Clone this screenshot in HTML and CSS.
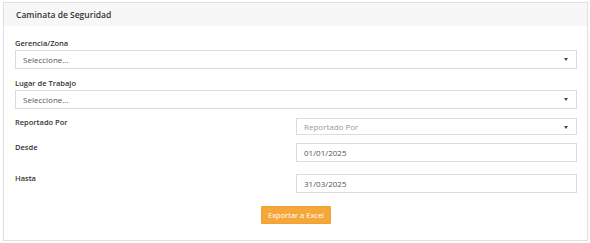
FILE: index.html
```html
<!DOCTYPE html>
<html lang="es">
<head>
  <meta charset="UTF-8" />
  <title>Caminata de Seguridad</title>
  <link rel="stylesheet" href="styles.css">
</head>
<body>
  <div class="panel">
    <div class="panel-heading">Caminata de Seguridad</div>
    <div class="panel-body">
      <label class="field-label">Gerencia/Zona</label>
      <div class="select">Seleccione...</div>

      <label class="field-label lugar">Lugar de Trabajo</label>
      <div class="select">Seleccione...</div>

      <div class="row row-reportado">
        <label class="field-label">Reportado Por</label>
        <div class="select placeholder">Reportado Por</div>
      </div>

      <div class="row row-desde">
        <label class="field-label">Desde</label>
        <div class="input">01/01/2025</div>
      </div>

      <div class="row row-hasta">
        <label class="field-label">Hasta</label>
        <div class="input">31/03/2025</div>
      </div>

      <div class="actions">
        <button class="btn-export">Exportar a Excel</button>
      </div>
    </div>
  </div>
</body>
</html>
```

FILE: styles.css
```css
body {
  margin: 0;
  padding: 2px 2px 2px 3px;
  font-family: "Open Sans", sans-serif;
  font-size: 8px;
  color: #333;
  background: #fff;
}

.panel {
  width: 585px;
  height: 239px;
  box-sizing: border-box;
  border: 1px solid #e1e1e1;
  box-shadow: 0 0 1px rgba(0, 0, 0, 0.08);
  background: #fff;
}

.panel-heading {
  height: 23px;
  line-height: 23px;
  padding-left: 12px;
  background: #f7f7f7;
  font-weight: 600;
  font-size: 8.5px;
  color: #333;
}

.panel-body {
  padding: 11px 10px 0 11px;
}

.field-label {
  display: block;
  font-weight: 600;
  font-size: 7.5px;
  line-height: 12px;
  margin-bottom: 1px;
  color: #333;
}

.lugar {
  margin-top: 8px;
}

.select, .input {
  position: relative;
  box-sizing: border-box;
  height: 19px;
  line-height: 17px;
  border: 1px solid #dcdcdc;
  padding-left: 7px;
  font-size: 8px;
  color: #555;
  background: #fff;
}

.select::after {
  content: "";
  position: absolute;
  right: 8px;
  top: 7px;
  border-left: 2.5px solid transparent;
  border-right: 2.5px solid transparent;
  border-top: 3px solid #444;
}

.placeholder {
  color: #999;
}

.row {
  display: grid;
  grid-template-columns: 1fr 1fr;
  align-items: start;
}

.row .field-label {
  margin: -2px 0 0 0;
}

.row-reportado {
  margin-top: 9px;
}

.row-reportado .select {
  height: 17px;
  line-height: 15px;
}

.row-desde {
  margin-top: 8px;
}

.row-hasta {
  margin-top: 12px;
}

.actions {
  display: flex;
  justify-content: center;
  margin-top: 13px;
}

.btn-export {
  height: 18px;
  padding: 0 6px;
  font-family: "Open Sans", sans-serif;
  font-size: 7.5px;
  color: #fff;
  background: #f6a73a;
  border: 1px solid #eea236;
  border-radius: 1px;
}
```
